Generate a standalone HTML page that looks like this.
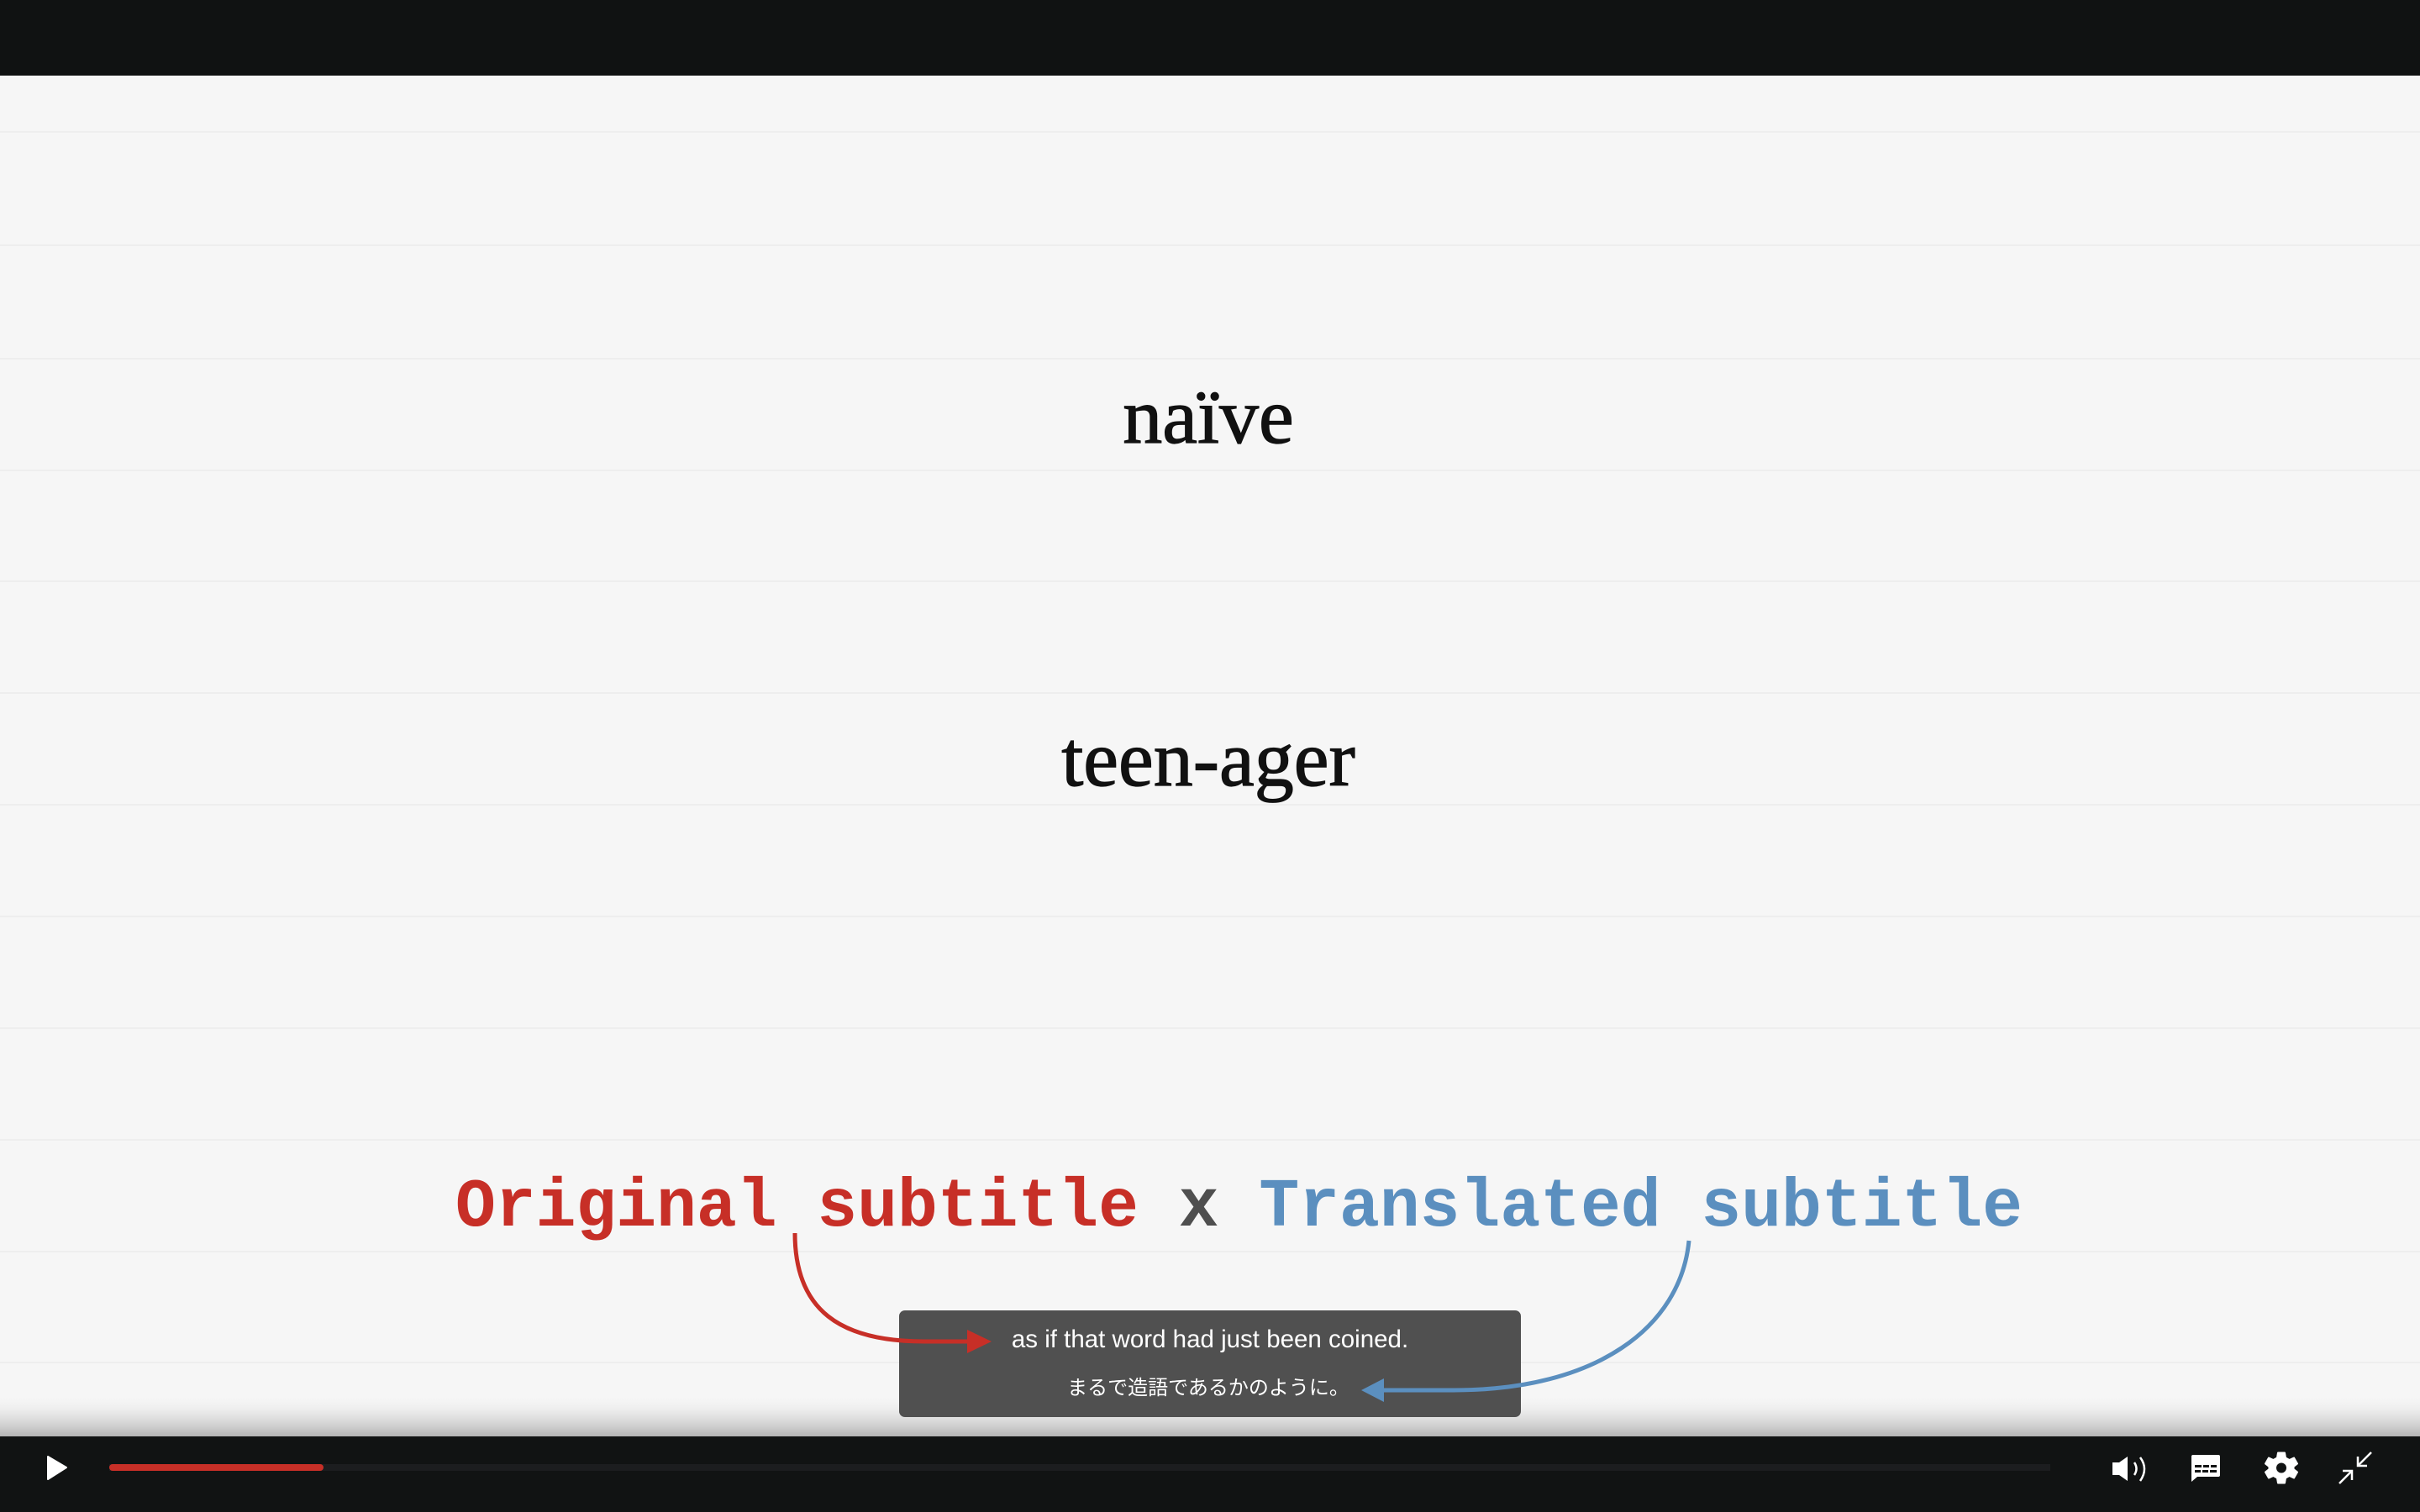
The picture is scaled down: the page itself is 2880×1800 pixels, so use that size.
<!DOCTYPE html>
<html><head><meta charset="utf-8"><style>
html,body{margin:0;padding:0;width:2880px;height:1800px;overflow:hidden;background:#111313}
svg{display:block}
</style></head><body>
<svg width="2880" height="1800" viewBox="0 0 2880 1800" xmlns="http://www.w3.org/2000/svg">
<defs>
<linearGradient id="fade" x1="0" y1="0" x2="0" y2="1">
<stop offset="0" stop-color="#f6f6f6" stop-opacity="0"/>
<stop offset="0.4" stop-color="#e2e2e2" stop-opacity="0.6"/>
<stop offset="1" stop-color="#b4b4b4" stop-opacity="1"/>
</linearGradient>
</defs>
<rect x="0" y="0" width="2880" height="90" fill="#101212"/>
<rect x="0" y="90" width="2880" height="1620" fill="#f6f6f6"/>
<g stroke="#eeeeee" stroke-width="2">
<line x1="0" y1="157" x2="2880" y2="157"/>
<line x1="0" y1="292" x2="2880" y2="292"/>
<line x1="0" y1="427" x2="2880" y2="427"/>
<line x1="0" y1="560" x2="2880" y2="560"/>
<line x1="0" y1="692" x2="2880" y2="692"/>
<line x1="0" y1="825" x2="2880" y2="825"/>
<line x1="0" y1="958" x2="2880" y2="958"/>
<line x1="0" y1="1091" x2="2880" y2="1091"/>
<line x1="0" y1="1224" x2="2880" y2="1224"/>
<line x1="0" y1="1357" x2="2880" y2="1357"/>
<line x1="0" y1="1490" x2="2880" y2="1490"/>
<line x1="0" y1="1622" x2="2880" y2="1622"/>
</g>
<rect x="0" y="1660" width="2880" height="50" fill="url(#fade)"/>
<text x="1438" y="527" text-anchor="middle" font-family="Liberation Serif, serif" font-size="94" fill="#111" stroke="#111" stroke-width="1.2">naïve</text>
<text x="1438" y="935" text-anchor="middle" font-family="Liberation Serif, serif" font-size="94" fill="#111" stroke="#111" stroke-width="1.2">teen-ager</text>
<text x="542" y="1459" font-family="Liberation Mono, monospace" font-weight="bold" font-size="82" textLength="1865" lengthAdjust="spacingAndGlyphs"><tspan fill="#c72f27">Original subtitle </tspan><tspan fill="#4f4f4f">x</tspan><tspan fill="#5b8fbf"> Translated subtitle</tspan></text>
<rect x="1070" y="1560" width="740" height="127" rx="7" fill="#505050"/>
<text x="1440" y="1604" text-anchor="middle" font-family="Liberation Sans, sans-serif" font-size="29.5" fill="#fff">as if that word had just been coined.</text>
<text x="1438" y="1660" text-anchor="middle" font-family="Liberation Sans, 'Noto Sans CJK JP', sans-serif" font-size="24" fill="#fff">まるで造語であるかのように。</text>
<path d="M946 1468 C946 1560 1000 1597 1100 1597 L1155 1597" fill="none" stroke="#c72f27" stroke-width="5"/>
<path d="M1151 1583 L1180 1597 L1151 1611 Z" fill="#c72f27"/>
<path d="M2010 1477 C2000 1580 1900 1655 1730 1655 L1645 1655" fill="none" stroke="#5b8fbf" stroke-width="5"/>
<path d="M1647 1641 L1620 1655 L1647 1669 Z" fill="#5b8fbf"/>
<rect x="0" y="1710" width="2880" height="90" fill="#111313"/>
<path d="M57 1734 L79 1747 L57 1761 Z" fill="#fff" stroke="#fff" stroke-width="2" stroke-linejoin="round"/>
<rect x="130" y="1743" width="2310" height="8" fill="#1c1d1f"/>
<rect x="130" y="1743" width="255" height="8" rx="4" fill="#c72f27"/>
<path d="M2514 1741 L2522 1741 L2532 1734 L2532 1763 L2522 1756 L2514 1756 Z" fill="#fff"/>
<path d="M2540 1741 Q2545 1748.5 2540 1756" fill="none" stroke="#fff" stroke-width="2.5"/>
<path d="M2547 1735 Q2557 1748.5 2547 1763" fill="none" stroke="#fff" stroke-width="2.5"/>
<path d="M2610 1732 L2640 1732 Q2642 1732 2642 1734 L2642 1756 Q2642 1758 2640 1758 L2615 1758 L2608 1764 L2608 1734 Q2608 1732 2610 1732 Z" fill="#fff"/>
<g fill="#111313"><rect x="2612" y="1744" width="8" height="3"/><rect x="2622" y="1744" width="7" height="3"/><rect x="2631" y="1744" width="7" height="3"/><rect x="2612" y="1750" width="7" height="3"/><rect x="2621" y="1750" width="7" height="3"/><rect x="2630" y="1750" width="8" height="3"/></g>
<g transform="translate(2715 1747.5)">
<path d="M-4 -18 L4 -18 L5 -12 L9.5 -9.5 L15 -12 L19 -5 L14.5 -1.5 L14.5 1.5 L19 5 L15 12 L9.5 9.5 L5 12 L4 18 L-4 18 L-5 12 L-9.5 9.5 L-15 12 L-19 5 L-14.5 1.5 L-14.5 -1.5 L-19 -5 L-15 -12 L-9.5 -9.5 L-5 -12 Z" fill="#fff" stroke="#fff" stroke-width="2" stroke-linejoin="round"/>
<circle r="6" fill="#111313"/>
</g>
<g stroke="#fff" stroke-width="2.5" fill="none">
<path d="M2822 1729 L2806 1745"/><path d="M2806 1734 L2806 1745 L2817 1745"/>
<path d="M2784 1766 L2799 1751"/><path d="M2788 1751 L2799 1751 L2799 1762"/>
</g>
</svg>
</body></html>
